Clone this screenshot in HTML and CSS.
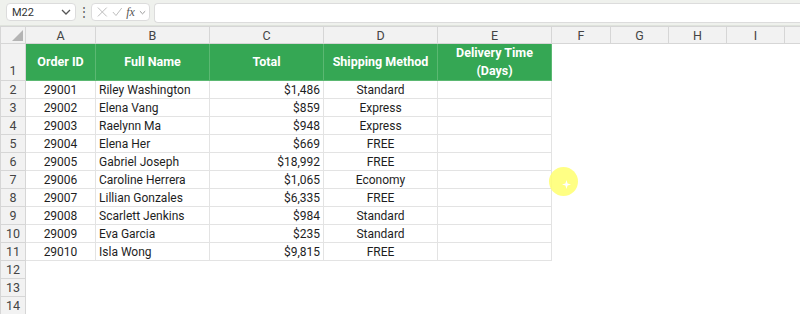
FILE: index.html
```html
<!DOCTYPE html>
<html lang="en">
<head>
  <meta charset="UTF-8" />
  <title>Orders</title>
  <link rel="stylesheet" href="styles.css">
</head>
<body>
  <div class="formula-bar">
    <div class="name-box">
      <span>M22</span>
      <svg width="10" height="6" viewBox="0 0 10 6"><path d="M1 1 L5 5 L9 1" fill="none" stroke="#555" stroke-width="1.3"/></svg>
    </div>
    <div class="dots">&#8942;</div>
    <div class="fx-box">
      <svg width="12" height="12" viewBox="0 0 12 12"><path d="M1 1 L11 11 M11 1 L1 11" stroke="#bbb" stroke-width="1.1"/></svg>
      <svg width="12" height="12" viewBox="0 0 12 12"><path d="M1 6 L4.5 10 L11 1.5" fill="none" stroke="#bbb" stroke-width="1.1"/></svg>
      <span class="fx">fx</span>
      <svg width="8" height="5" viewBox="0 0 8 5"><path d="M1 1 L4 4 L7 1" fill="none" stroke="#888" stroke-width="1"/></svg>
    </div>
    <div class="formula-input"></div>
  </div>

  <div class="sheet">
    <table>
      <colgroup>
        <col class="c-row">
        <col class="c-a">
        <col class="c-wide">
        <col class="c-wide">
        <col class="c-wide">
        <col class="c-wide">
        <col class="c-f">
        <col class="c-g">
        <col class="c-g">
        <col class="c-g">
        <col>
      </colgroup>
      <thead>
        <tr class="col-heads">
          <th class="corner"><span class="tri"></span></th>
          <th>A</th><th>B</th><th>C</th><th>D</th><th>E</th><th>F</th><th>G</th><th>H</th><th>I</th><th></th>
        </tr>
      </thead>
      <tbody id="rows">
        <tr class="title-row">
          <th class="rn rn-low">1</th>
          <td class="hd">Order ID</td>
          <td class="hd">Full Name</td>
          <td class="hd">Total</td>
          <td class="hd">Shipping Method</td>
          <td class="hd">Delivery Time<br>(Days)</td>
          <td class="blank"></td><td class="blank"></td><td class="blank"></td><td class="blank"></td><td class="blank"></td>
        </tr>
      </tbody>
    </table>
    <div class="cursor"><span class="spark"></span></div>
  </div>

  <script>
    const orders = [
      [29001, 'Riley Washington', '$1,486', 'Standard'],
      [29002, 'Elena Vang', '$859', 'Express'],
      [29003, 'Raelynn Ma', '$948', 'Express'],
      [29004, 'Elena Her', '$669', 'FREE'],
      [29005, 'Gabriel Joseph', '$18,992', 'FREE'],
      [29006, 'Caroline Herrera', '$1,065', 'Economy'],
      [29007, 'Lillian Gonzales', '$6,335', 'FREE'],
      [29008, 'Scarlett Jenkins', '$984', 'Standard'],
      [29009, 'Eva Garcia', '$235', 'Standard'],
      [29010, 'Isla Wong', '$9,815', 'FREE']
    ];

    const body = document.getElementById('rows');
    orders.forEach((o, i) => {
      body.innerHTML += `<tr>
        <th class="rn">${i + 2}</th>
        <td class="ctr">${o[0]}</td>
        <td>${o[1]}</td>
        <td class="num">${o[2]}</td>
        <td class="ctr">${o[3]}</td>
        <td></td>
        <td class="blank"></td><td class="blank"></td><td class="blank"></td><td class="blank"></td><td class="blank"></td>
      </tr>`;
    });
    for (let r = 12; r <= 14; r++) {
      body.innerHTML += `<tr><th class="rn">${r}</th>` + '<td class="blank"></td>'.repeat(10) + '</tr>';
    }
  </script>
</body>
</html>
```

FILE: styles.css
```css
html, body {
  margin: 0;
  padding: 0;
  background: #fff;
  font-family: Roboto, "Liberation Sans", sans-serif;
  color: #1e1e1e;
  overflow: hidden;
}
.formula-bar {
  height: 26px;
  background: #eff1ed;
  display: flex;
  align-items: flex-start;
  padding-top: 3px;
  box-sizing: border-box;
  border-bottom: 1px solid #dfe3dc;
}
.name-box {
  margin-left: 6px;
  width: 70px;
  height: 18px;
  box-sizing: border-box;
  background: #fff;
  border: 1px solid #dcdcdc;
  border-radius: 4px;
  display: flex;
  align-items: center;
  justify-content: space-between;
  padding: 0 4px 0 5px;
  font-size: 11px;
  color: #333;
}
.dots {
  width: 15px;
  text-align: center;
  font-size: 12px;
  line-height: 18px;
  color: #555;
}
.fx-box {
  width: 59px;
  height: 18px;
  box-sizing: border-box;
  background: #fff;
  border: 1px solid #dcdcdc;
  border-radius: 4px;
  display: flex;
  align-items: center;
  gap: 4px;
  padding: 0 3px 0 5px;
}
.fx {
  font-family: "Liberation Serif", serif;
  font-style: italic;
  font-size: 12px;
  color: #555;
}
.formula-input {
  margin-left: 4px;
  flex: 1;
  height: 18px;
  background: #fff;
  border: 1px solid #dcdcdc;
  border-right: none;
  border-radius: 4px 0 0 4px;
}
.sheet {
  position: relative;
}
table {
  border-collapse: collapse;
  table-layout: fixed;
  width: 800px;
  font-size: 12px;
}
.c-row { width: 25px; }
.c-a { width: 70px; }
.c-wide { width: 114px; }
.c-f { width: 59px; }
.c-g { width: 58px; }
th, td {
  padding: 0 3px;
  height: 17px;
  line-height: 16px;
  white-space: nowrap;
  overflow: hidden;
}
td {
  border: 1px solid #e3e3e3;
}
td.blank {
  border-color: transparent;
}
.col-heads th {
  height: 16px;
  background: #f2f2f2;
  border: 1px solid #d6d6d6;
  font-weight: normal;
  color: #444;
  font-size: 12.5px;
  line-height: 15px;
}
.col-heads th:last-child {
  border-right: none;
}
.corner {
  position: relative;
}
.tri {
  position: absolute;
  right: 2px;
  bottom: 2px;
  width: 0;
  height: 0;
  border-left: 11px solid transparent;
  border-bottom: 11px solid #b4b4b4;
}
.rn {
  background: #f2f2f2;
  border: 1px solid #d6d6d6;
  border-top-color: #e0e0e0;
  font-weight: normal;
  color: #444;
  font-size: 12.5px;
  text-align: center;
  padding: 0;
}
.rn-low {
  vertical-align: bottom;
  padding-bottom: 1px;
}
.title-row td {
  height: 36px;
}
.hd {
  background: #35a754;
  color: #fff;
  font-weight: bold;
  text-align: center;
  border-color: #5bb872;
  font-size: 12.5px;
  line-height: 18px;
}
.ctr {
  text-align: center;
}
.num {
  text-align: right;
}
.cursor {
  position: absolute;
  left: 549px;
  top: 141px;
  width: 29px;
  height: 29px;
  border-radius: 50%;
  background: rgba(255, 255, 110, 0.85);
}
.spark {
  position: absolute;
  left: 13px;
  top: 13px;
  width: 9px;
  height: 9px;
  background: #fff;
  clip-path: polygon(50% 0, 62% 38%, 100% 50%, 62% 62%, 50% 100%, 38% 62%, 0 50%, 38% 38%);
}
```
